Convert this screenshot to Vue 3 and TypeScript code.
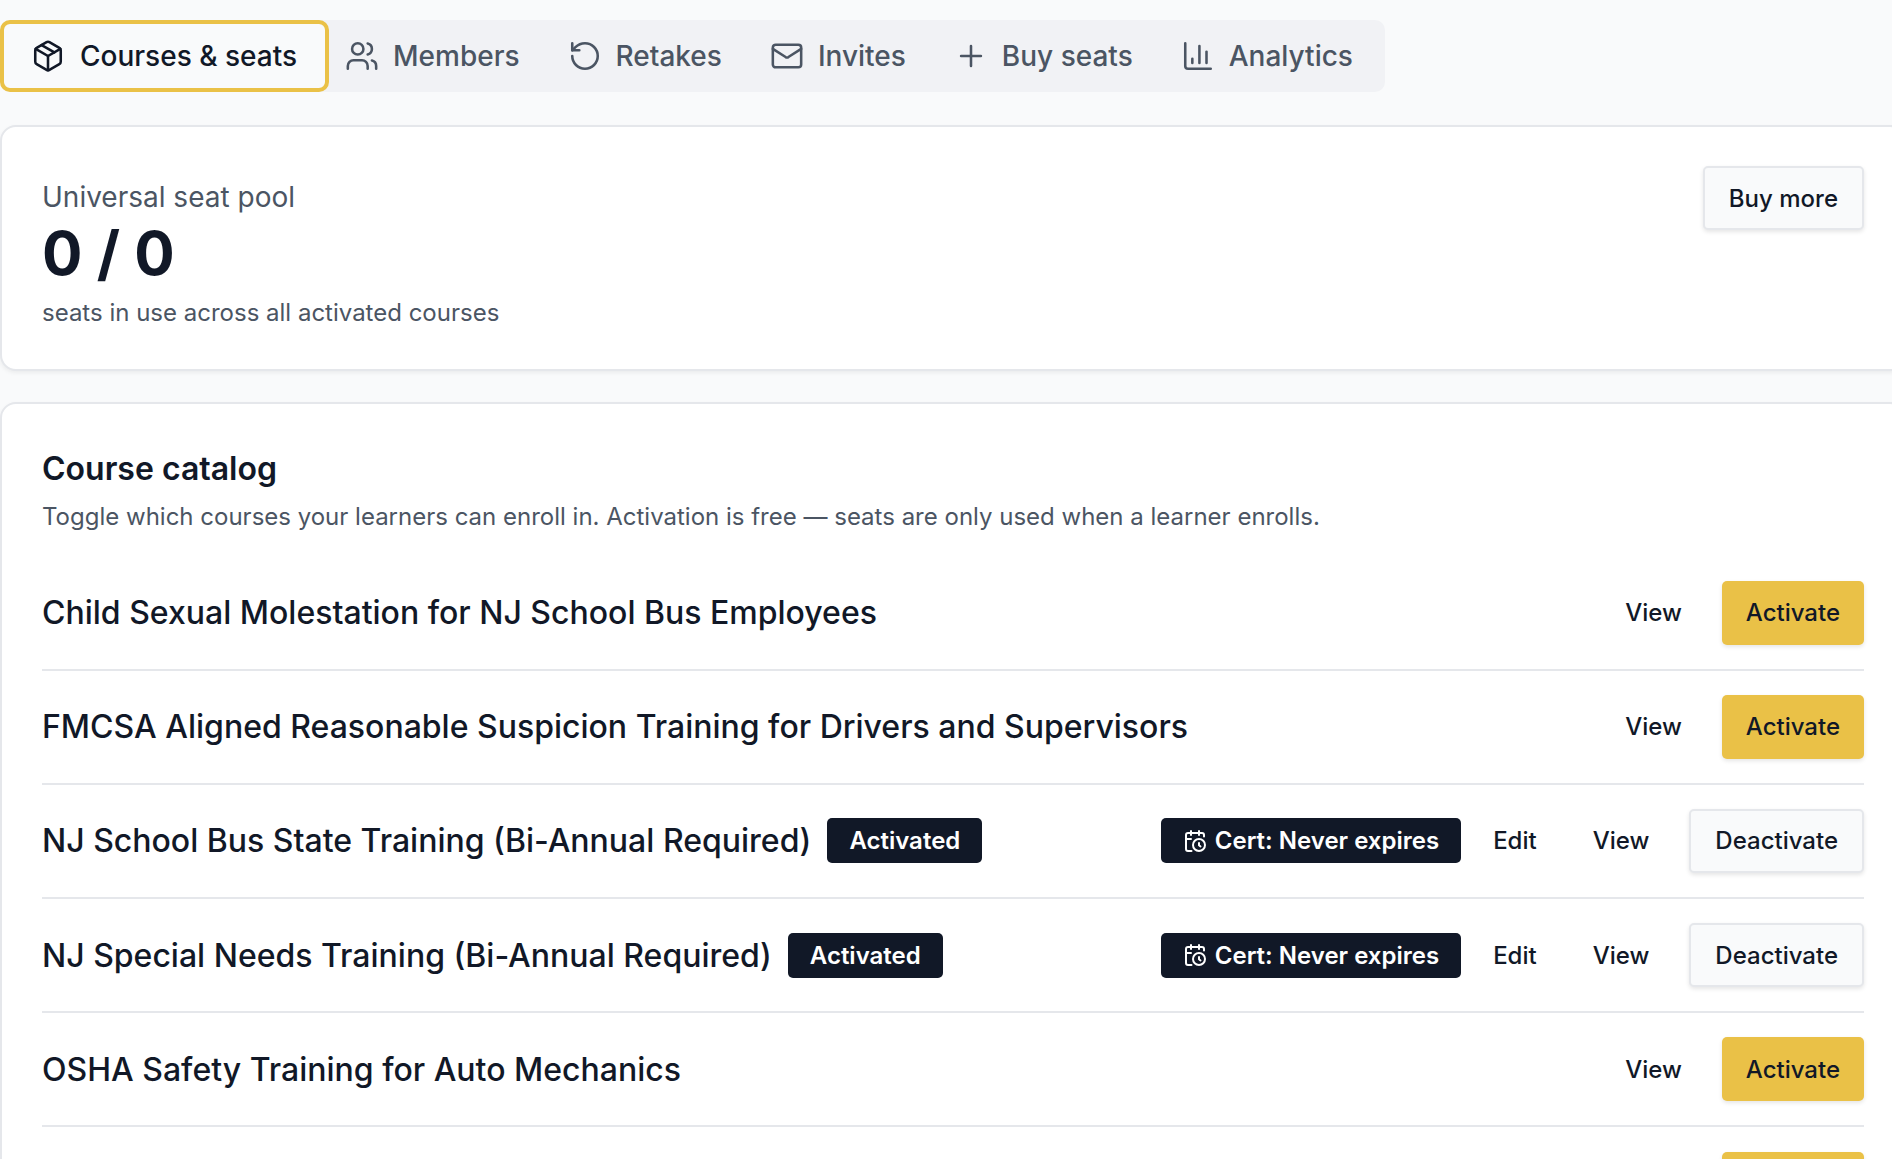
<script setup lang="ts">
interface Course {
  title: string
  active: boolean
}

const tabs = [
  { label: 'Courses & seats', icon: 'package' },
  { label: 'Members', icon: 'users' },
  { label: 'Retakes', icon: 'retake' },
  { label: 'Invites', icon: 'mail' },
  { label: 'Buy seats', icon: 'plus' },
  { label: 'Analytics', icon: 'chart' }
]

const courses: Course[] = [
  { title: 'Child Sexual Molestation for NJ School Bus Employees', active: false },
  { title: 'FMCSA Aligned Reasonable Suspicion Training for Drivers and Supervisors', active: false },
  { title: 'NJ School Bus State Training (Bi-Annual Required)', active: true },
  { title: 'NJ Special Needs Training (Bi-Annual Required)', active: true },
  { title: 'OSHA Safety Training for Auto Mechanics', active: false },
  { title: '', active: false }
]
</script>

<template>
  <div class="page">
    <nav class="tabs">
      <button v-for="(tab, i) in tabs" :key="tab.label" class="tab" :class="{ current: i === 0 }">
        <svg class="icon" viewBox="0 0 24 24">
          <template v-if="tab.icon === 'package'">
            <path d="M11 21.73a2 2 0 0 0 2 0l7-4A2 2 0 0 0 21 16V8a2 2 0 0 0-1-1.73l-7-4a2 2 0 0 0-2 0l-7 4A2 2 0 0 0 3 8v8a2 2 0 0 0 1 1.73z" />
            <path d="M12 22V12" />
            <polyline points="3.29 7 12 12 20.71 7" />
            <path d="m7.5 4.27 9 5.15" />
          </template>
          <template v-else-if="tab.icon === 'users'">
            <path d="M16 21v-2a4 4 0 0 0-4-4H6a4 4 0 0 0-4 4v2" />
            <path d="M16 3.128a4 4 0 0 1 0 7.744" />
            <path d="M22 21v-2a4 4 0 0 0-3-3.87" />
            <circle cx="9" cy="7" r="4" />
          </template>
          <template v-else-if="tab.icon === 'retake'">
            <path d="M3 12a9 9 0 1 0 9-9 9.75 9.75 0 0 0-6.74 2.74L3 8" />
            <path d="M3 3v5h5" />
          </template>
          <template v-else-if="tab.icon === 'mail'">
            <path d="m22 7-8.991 5.727a2 2 0 0 1-2.009 0L2 7" />
            <rect x="2" y="4" width="20" height="16" rx="2" />
          </template>
          <template v-else-if="tab.icon === 'plus'">
            <path d="M5 12h14" />
            <path d="M12 5v14" />
          </template>
          <template v-else>
            <path d="M3 3v16a2 2 0 0 0 2 2h16" />
            <path d="M18 17V9" />
            <path d="M13 17V5" />
            <path d="M8 17v-3" />
          </template>
        </svg>
        {{ tab.label }}
      </button>
    </nav>

    <section class="card pool">
      <div class="pool-text">
        <div class="pool-label">Universal seat pool</div>
        <div class="pool-count">0 / 0</div>
        <div class="pool-note">seats in use across all activated courses</div>
      </div>
      <button class="btn outline">Buy more</button>
    </section>

    <section class="card catalog">
      <h2>Course catalog</h2>
      <p>Toggle which courses your learners can enroll in. Activation is free — seats are only used when a learner enrolls.</p>
      <div v-for="course in courses" :key="course.title" class="row">
        <div class="row-title">
          <span>{{ course.title }}</span>
          <span v-if="course.active" class="badge">Activated</span>
        </div>
        <div class="row-actions">
          <template v-if="course.active">
            <span class="badge cert">
              <svg class="cert-icon" viewBox="0 0 24 24">
                <path d="M21 7.5V6a2 2 0 0 0-2-2H5a2 2 0 0 0-2 2v14a2 2 0 0 0 2 2h3.5" />
                <path d="M16 2v4" />
                <path d="M8 2v4" />
                <path d="M3 10h5" />
                <path d="M17.5 17.5 16 16.3V14" />
                <circle cx="16" cy="16" r="6" />
              </svg>
              Cert: Never expires
            </span>
            <button class="btn ghost">Edit</button>
          </template>
          <button class="btn ghost">View</button>
          <button v-if="course.active" class="btn outline">Deactivate</button>
          <button v-else class="btn primary">Activate</button>
        </div>
      </div>
    </section>
  </div>
</template>

<style scoped>
.page {
  width: 1906px;
  height: 1159px;
  overflow: hidden;
  padding-top: 20px;
  box-sizing: border-box;
  background: #f9fafb;
  font-family: Inter, "Liberation Sans", sans-serif;
  color: #111827;
}

button {
  font-family: inherit;
  cursor: pointer;
}

.tabs {
  display: inline-flex;
  height: 72px;
  padding-right: 8px;
  background: #f1f2f5;
  border-radius: 10px;
  vertical-align: top;
}

.tab {
  display: flex;
  align-items: center;
  gap: 14px;
  padding: 0 24px;
  border: 0;
  background: none;
  font-size: 28px;
  font-weight: 500;
  color: #4b5563;
}

.tab.current {
  padding: 0 28px 0 27px;
  gap: 15px;
  border: 4px solid #eac147;
  border-radius: 10px;
  background: #f9fafb;
  color: #111827;
}

.tab.current + .tab {
  padding-left: 16px;
}

.icon {
  width: 34px;
  height: 34px;
  fill: none;
  stroke: currentColor;
  stroke-width: 1.8;
  stroke-linecap: round;
  stroke-linejoin: round;
}

.card {
  box-sizing: border-box;
  background: #fff;
  border: 2px solid #e5e7eb;
  border-radius: 16px;
  box-shadow: 0 2px 4px rgba(0, 0, 0, 0.06);
}

.pool {
  display: flex;
  justify-content: space-between;
  align-items: flex-start;
  height: 246px;
  margin-top: 33px;
  padding: 39px 40px 0;
}

.pool-text {
  padding-top: 10px;
}

.pool-label {
  font-size: 28px;
  line-height: 42px;
  color: #4b5563;
}

.pool-count {
  font-size: 60px;
  font-weight: 700;
  line-height: 70px;
}

.pool-note {
  margin-top: 7px;
  font-size: 24px;
  line-height: 36px;
  color: #4b5563;
}

.catalog {
  margin-top: 31px;
  padding: 44px 40px 0;
  height: 900px;
}

h2 {
  margin: 0;
  font-size: 32px;
  font-weight: 600;
  line-height: 42px;
}

p {
  margin: 8px 0 20.5px;
  font-size: 24px;
  line-height: 38px;
  color: #4b5563;
}

.row {
  display: flex;
  align-items: center;
  justify-content: space-between;
  box-sizing: border-box;
  height: 114.2px;
  border-bottom: 2px solid #e5e7eb;
}

.row-title {
  display: flex;
  align-items: center;
  gap: 16px;
  font-size: 32px;
  font-weight: 500;
}

.row-actions {
  display: flex;
  align-items: center;
  gap: 8px;
}

.badge {
  display: inline-flex;
  align-items: center;
  height: 45px;
  padding: 0 22px;
  border-radius: 5px;
  background: #111827;
  color: #fff;
  font-size: 24px;
  font-weight: 600;
}

.cert {
  gap: 8px;
  padding: 0 22px;
  margin-right: 0;
}

.cert-icon {
  width: 24px;
  height: 24px;
  fill: none;
  stroke: currentColor;
  stroke-width: 2;
  stroke-linecap: round;
  stroke-linejoin: round;
}

.btn {
  box-sizing: border-box;
  height: 64px;
  padding: 0 24px;
  border-radius: 5px;
  border: 0;
  font-size: 24px;
  font-weight: 500;
  color: #111827;
}

.ghost {
  background: none;
}

.primary {
  margin-left: 8px;
  background: #eac147;
  box-shadow: 0 2px 4px rgba(0, 0, 0, 0.1);
}

.outline {
  margin-left: 8px;
  background: #f9fafb;
  border: 2px solid #e5e7eb;
  box-shadow: 0 2px 4px rgba(0, 0, 0, 0.1);
}
</style>

<style>
html,
body {
  overflow: hidden;
}
</style>
